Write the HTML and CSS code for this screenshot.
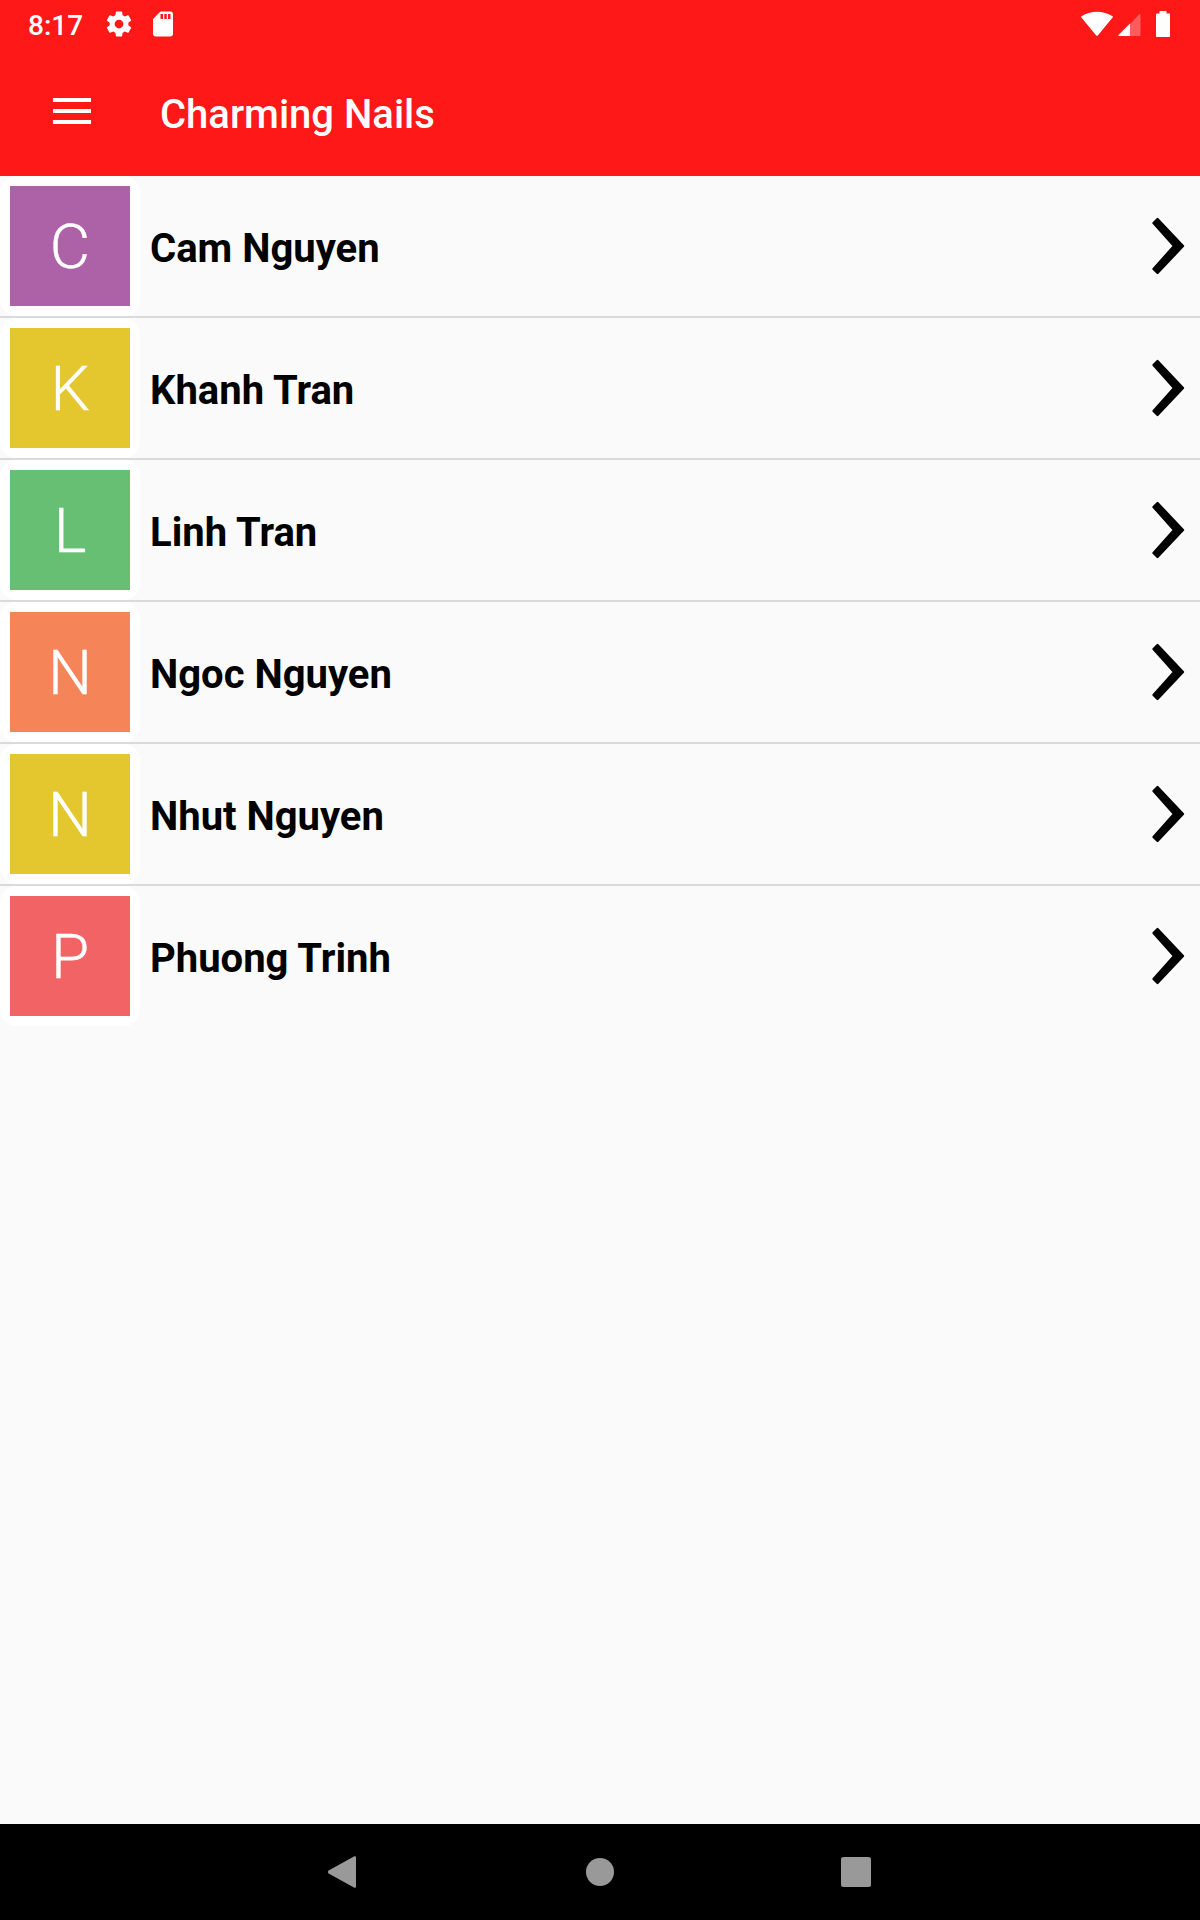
FILE: index.html
```html
<!DOCTYPE html>
<html lang="en">
<head>
    <meta charset="UTF-8">
    <meta name="viewport" content="width=device-width, initial-scale=1.0">
    <title>Charming Nails</title>
    <link rel="stylesheet" href="styles.css">
</head>
<body>
    <svg class="defs" width="0" height="0">
        <symbol id="chevron" viewBox="0 0 34 58">
            <path d="M6.500 2L32 29L6.500 56L2.500 52L23 29L2.500 6Z" stroke="#000" stroke-width="2.400" stroke-linejoin="round"/>
        </symbol>
    </svg>
    <header class="header">
        <div class="status-bar">
            <span class="time">8:17</span>
            <svg class="gear" width="30" height="30" viewBox="0 0 24 24" fill="#fff">
                <path d="M19.43 12.98c.04-.32.07-.64.07-.98s-.03-.66-.07-.98l2.11-1.65c.19-.15.24-.42.12-.64l-2-3.46c-.12-.22-.39-.3-.61-.22l-2.49 1c-.52-.4-1.08-.73-1.69-.98l-.38-2.65C14.46 2.18 14.25 2 14 2h-4c-.25 0-.46.18-.49.42l-.38 2.65c-.61.25-1.17.59-1.69.98l-2.49-1c-.23-.09-.49 0-.61.22l-2 3.46c-.13.22-.07.49.12.64l2.11 1.65c-.04.32-.07.65-.07.98s.03.66.07.98l-2.11 1.65c-.19.15-.24.42-.12.64l2 3.46c.12.22.39.3.61.22l2.49-1c.52.4 1.08.73 1.69.98l.38 2.65c.03.24.24.42.49.42h4c.25 0 .46-.18.49-.42l.38-2.65c.61-.25 1.17-.59 1.69-.98l2.49 1c.23.09.49 0 .61-.22l2-3.46c.12-.22.07-.49-.12-.64l-2.11-1.65zM12 15.5c-1.93 0-3.5-1.57-3.5-3.5s1.57-3.5 3.5-3.5 3.5 1.57 3.5 3.5-1.57 3.5-3.5 3.5z"/>
            </svg>
            <svg class="sd-card" width="30" height="30" viewBox="0 0 24 24" fill="#fff">
                <path d="M18 2h-8L4.02 8 4 20c0 1.1.9 2 2 2h12c1.1 0 2-.9 2-2V4c0-1.1-.9-2-2-2zm-6 6h-2V4h2v4zm3 0h-2V4h2v4zm3 0h-2V4h2v4z"/>
            </svg>
            <div class="status-right">
                <svg width="32" height="26" viewBox="0 0 32 26" fill="#fff">
                    <path d="M.4 6.6C-.1 6.2 0 5.6.5 5.2C9.500-.9 22.500-.9 31.500 5.200C32 5.600 32.100 6.200 31.600 6.600L17 24.300C16.400 25 15.600 25 15 24.300Z"/>
                </svg>
                <svg class="signal" width="24" height="26" viewBox="0 0 24 26" fill="#fff">
                    <path d="M13 13L22.300 3.300C23 2.600 23.500 3 23.500 3.500V24C23.500 24.700 23.200 25 22.500 25H13Z" opacity=".3"/>
                    <path d="M13 12.500V25H2C1.200 25 1 24.400 1.500 23.900Z"/>
                </svg>
                <svg class="battery" width="14" height="26" viewBox="0 0 14 26" fill="#fff">
                    <path d="M3.500 0H10.500V2.500H13C13.600 2.500 14 3 14 3.500V25C14 25.600 13.600 26 13 26H1C.4 26 0 25.600 0 25V3.500C0 3 .4 2.500 1 2.500H3.500Z"/>
                </svg>
            </div>
        </div>
        <div class="toolbar">
            <div class="menu">
                <span></span>
                <span></span>
                <span></span>
            </div>
            <h1>Charming Nails</h1>
        </div>
    </header>

    <ul class="list">
        <li class="row">
            <div class="avatar"><span class="letter purple">C</span></div>
            <span class="name">Cam Nguyen</span>
            <svg class="chevron"><use href="#chevron"/></svg>
        </li>
        <li class="row">
            <div class="avatar"><span class="letter yellow">K</span></div>
            <span class="name">Khanh Tran</span>
            <svg class="chevron"><use href="#chevron"/></svg>
        </li>
        <li class="row">
            <div class="avatar"><span class="letter green">L</span></div>
            <span class="name">Linh Tran</span>
            <svg class="chevron"><use href="#chevron"/></svg>
        </li>
        <li class="row">
            <div class="avatar"><span class="letter orange">N</span></div>
            <span class="name">Ngoc Nguyen</span>
            <svg class="chevron"><use href="#chevron"/></svg>
        </li>
        <li class="row">
            <div class="avatar"><span class="letter yellow">N</span></div>
            <span class="name">Nhut Nguyen</span>
            <svg class="chevron"><use href="#chevron"/></svg>
        </li>
        <li class="row">
            <div class="avatar"><span class="letter red">P</span></div>
            <span class="name">Phuong Trinh</span>
            <svg class="chevron"><use href="#chevron"/></svg>
        </li>
    </ul>

    <nav class="nav-bar">
        <svg width="28" height="32" viewBox="0 0 28 32" fill="#999">
            <path d="M.6 14.600L26 .4C27.200-.2 28 .2 28 1.500V30.500C28 31.800 27.200 32.200 26 31.600L.6 17.400C-.3 16.700-.3 15.300.6 14.600Z"/>
        </svg>
        <svg width="30" height="28" viewBox="0 0 30 28" fill="#999">
            <circle cx="16" cy="14" r="14"/>
        </svg>
        <svg width="30" height="30" viewBox="0 0 30 30" fill="#999">
            <rect width="30" height="30" rx="2.500"/>
        </svg>
    </nav>
</body>
</html>
```
FILE: styles.css
```css
* {
    box-sizing: border-box;
}
body {
    font-family: Roboto, sans-serif;
    margin: 0;
    min-height: 1920px;
    display: flex;
    flex-direction: column;
    background-color: #fafafa;
}
svg {
    display: block;
    flex-shrink: 0;
}
.defs {
    display: none;
}
.header {
    height: 176px;
    background-color: #ff1818;
    color: #fff;
}
.status-bar {
    height: 48px;
    padding: 0 30px 0 28px;
    display: flex;
    align-items: center;
}
.time {
    width: 76px;
    font-size: 28px;
    font-weight: 500;
    line-height: 32px;
    padding-top: 4px;
}
.sd-card {
    margin-left: 14px;
}
.status-right {
    margin-left: auto;
    display: flex;
    align-items: center;
}
.signal {
    margin-left: 4px;
}
.battery {
    margin-left: 15px;
}
.toolbar {
    height: 128px;
    padding-left: 53px;
    display: flex;
    align-items: center;
}
.menu {
    width: 38px;
    margin-right: 69px;
    display: flex;
    flex-direction: column;
    gap: 7px;
    margin-top: -2px;
}
.menu span {
    height: 4px;
    background-color: #fff;
}
h1 {
    margin: 0;
    padding-top: 6px;
    font-size: 40px;
    font-weight: 500;
    line-height: 48px;
}
.list {
    flex: 1;
    list-style-type: none;
    margin: 0;
    padding: 0;
}
.row {
    height: 142px;
    padding-right: 15px;
    display: flex;
    align-items: center;
    border-bottom: 2px solid #dadada;
}
.row:last-child {
    border-bottom-color: transparent;
}
.avatar {
    width: 140px;
    height: 140px;
    padding: 10px;
    background-color: #fff;
    border-radius: 16px;
}
.letter {
    display: block;
    height: 120px;
    font-size: 62px;
    font-weight: 300;
    line-height: 121px;
    text-align: center;
    color: #fff;
    -webkit-text-stroke: 0.4px #fff;
}
.purple {
    background-color: #ad62a7;
}
.yellow {
    background-color: #e4c62e;
}
.green {
    background-color: #67bf74;
}
.orange {
    background-color: #f58559;
}
.red {
    background-color: #f16364;
}
.name {
    flex: 1;
    padding: 6px 0 0 10px;
    font-size: 40px;
    font-weight: 700;
    line-height: 48px;
    color: #000;
}
.chevron {
    width: 34px;
    height: 58px;
}
.nav-bar {
    height: 96px;
    padding: 0 329px 0 328px;
    display: flex;
    align-items: center;
    justify-content: space-between;
    background-color: #000;
}
```
